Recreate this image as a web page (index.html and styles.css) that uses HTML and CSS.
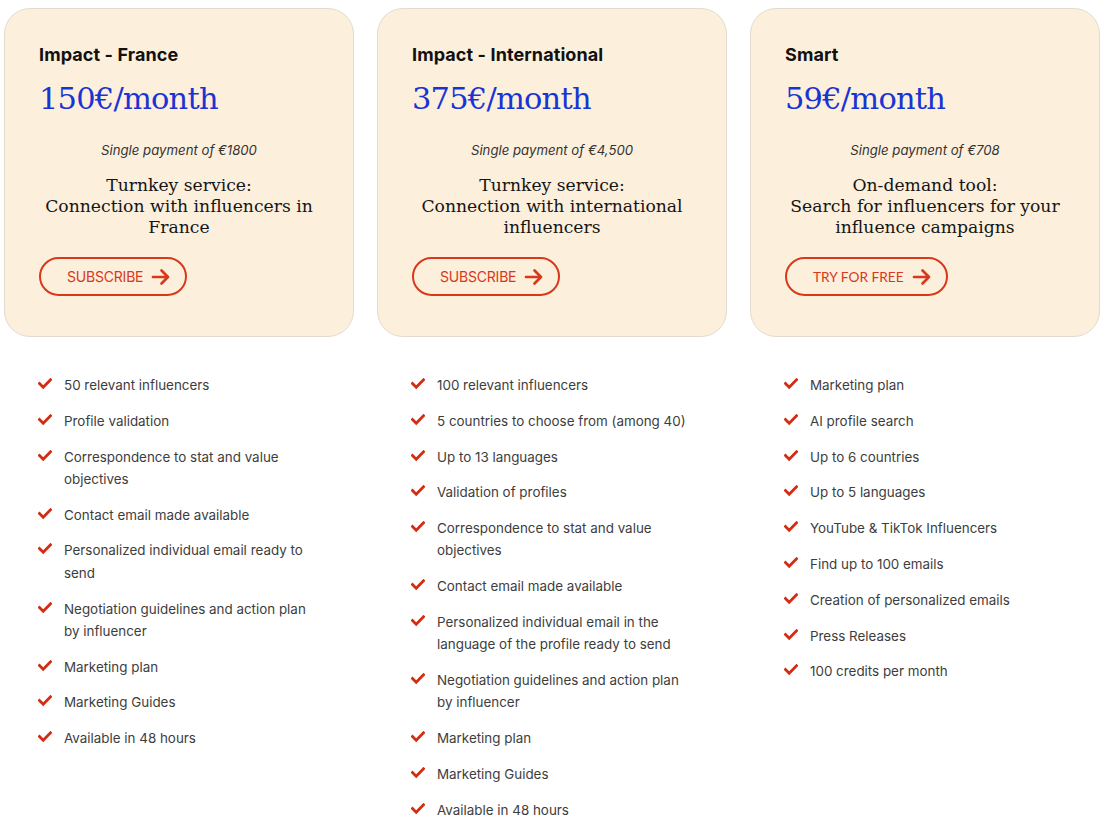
FILE: index.html
```html
<!DOCTYPE html>
<html>
<head>
<meta charset="utf-8">
<link rel="stylesheet" href="styles.css">
</head>
<body>
<div class="plans">
  <div class="plan">
    <div class="card">
      <h2 class="title">Impact - France</h2>
      <div class="price">150€/month</div>
      <div class="single">Single payment of €1800</div>
      <div class="desc">Turnkey service:<br>Connection with influencers in France</div>
      <a class="btn">SUBSCRIBE <svg class="arrow" viewBox="0 0 20 18"><path d="M2 9 H17 M10.5 2.5 L17 9 L10.5 15.5"/></svg></a>
    </div>
    <ul class="features">
      <li><svg class="check" viewBox="0 0 14 12"><path d="M1.5 5.5 L5.2 9.2 L12.5 1.8"/></svg><span>50 relevant influencers</span></li>
      <li><svg class="check" viewBox="0 0 14 12"><path d="M1.5 5.5 L5.2 9.2 L12.5 1.8"/></svg><span>Profile validation</span></li>
      <li><svg class="check" viewBox="0 0 14 12"><path d="M1.5 5.5 L5.2 9.2 L12.5 1.8"/></svg><span>Correspondence to stat and value objectives</span></li>
      <li><svg class="check" viewBox="0 0 14 12"><path d="M1.5 5.5 L5.2 9.2 L12.5 1.8"/></svg><span>Contact email made available</span></li>
      <li><svg class="check" viewBox="0 0 14 12"><path d="M1.5 5.5 L5.2 9.2 L12.5 1.8"/></svg><span>Personalized individual email ready to send</span></li>
      <li><svg class="check" viewBox="0 0 14 12"><path d="M1.5 5.5 L5.2 9.2 L12.5 1.8"/></svg><span>Negotiation guidelines and action plan by influencer</span></li>
      <li><svg class="check" viewBox="0 0 14 12"><path d="M1.5 5.5 L5.2 9.2 L12.5 1.8"/></svg><span>Marketing plan</span></li>
      <li><svg class="check" viewBox="0 0 14 12"><path d="M1.5 5.5 L5.2 9.2 L12.5 1.8"/></svg><span>Marketing Guides</span></li>
      <li><svg class="check" viewBox="0 0 14 12"><path d="M1.5 5.5 L5.2 9.2 L12.5 1.8"/></svg><span>Available in 48 hours</span></li>
    </ul>
  </div>
  <div class="plan">
    <div class="card">
      <h2 class="title">Impact - International</h2>
      <div class="price">375€/month</div>
      <div class="single">Single payment of €4,500</div>
      <div class="desc">Turnkey service:<br>Connection with international influencers</div>
      <a class="btn">SUBSCRIBE <svg class="arrow" viewBox="0 0 20 18"><path d="M2 9 H17 M10.5 2.5 L17 9 L10.5 15.5"/></svg></a>
    </div>
    <ul class="features">
      <li><svg class="check" viewBox="0 0 14 12"><path d="M1.5 5.5 L5.2 9.2 L12.5 1.8"/></svg><span>100 relevant influencers</span></li>
      <li><svg class="check" viewBox="0 0 14 12"><path d="M1.5 5.5 L5.2 9.2 L12.5 1.8"/></svg><span>5 countries to choose from (among 40)</span></li>
      <li><svg class="check" viewBox="0 0 14 12"><path d="M1.5 5.5 L5.2 9.2 L12.5 1.8"/></svg><span>Up to 13 languages</span></li>
      <li><svg class="check" viewBox="0 0 14 12"><path d="M1.5 5.5 L5.2 9.2 L12.5 1.8"/></svg><span>Validation of profiles</span></li>
      <li><svg class="check" viewBox="0 0 14 12"><path d="M1.5 5.5 L5.2 9.2 L12.5 1.8"/></svg><span>Correspondence to stat and value objectives</span></li>
      <li><svg class="check" viewBox="0 0 14 12"><path d="M1.5 5.5 L5.2 9.2 L12.5 1.8"/></svg><span>Contact email made available</span></li>
      <li><svg class="check" viewBox="0 0 14 12"><path d="M1.5 5.5 L5.2 9.2 L12.5 1.8"/></svg><span>Personalized individual email in the language of the profile ready to send</span></li>
      <li><svg class="check" viewBox="0 0 14 12"><path d="M1.5 5.5 L5.2 9.2 L12.5 1.8"/></svg><span>Negotiation guidelines and action plan by influencer</span></li>
      <li><svg class="check" viewBox="0 0 14 12"><path d="M1.5 5.5 L5.2 9.2 L12.5 1.8"/></svg><span>Marketing plan</span></li>
      <li><svg class="check" viewBox="0 0 14 12"><path d="M1.5 5.5 L5.2 9.2 L12.5 1.8"/></svg><span>Marketing Guides</span></li>
      <li><svg class="check" viewBox="0 0 14 12"><path d="M1.5 5.5 L5.2 9.2 L12.5 1.8"/></svg><span>Available in 48 hours</span></li>
    </ul>
  </div>
  <div class="plan">
    <div class="card">
      <h2 class="title">Smart</h2>
      <div class="price">59€/month</div>
      <div class="single">Single payment of €708</div>
      <div class="desc">On-demand tool:<br>Search for influencers for your influence campaigns</div>
      <a class="btn btn-lato">TRY FOR FREE <svg class="arrow" viewBox="0 0 20 18"><path d="M2 9 H17 M10.5 2.5 L17 9 L10.5 15.5"/></svg></a>
    </div>
    <ul class="features">
      <li><svg class="check" viewBox="0 0 14 12"><path d="M1.5 5.5 L5.2 9.2 L12.5 1.8"/></svg><span>Marketing plan</span></li>
      <li><svg class="check" viewBox="0 0 14 12"><path d="M1.5 5.5 L5.2 9.2 L12.5 1.8"/></svg><span>AI profile search</span></li>
      <li><svg class="check" viewBox="0 0 14 12"><path d="M1.5 5.5 L5.2 9.2 L12.5 1.8"/></svg><span>Up to 6 countries</span></li>
      <li><svg class="check" viewBox="0 0 14 12"><path d="M1.5 5.5 L5.2 9.2 L12.5 1.8"/></svg><span>Up to 5 languages</span></li>
      <li><svg class="check" viewBox="0 0 14 12"><path d="M1.5 5.5 L5.2 9.2 L12.5 1.8"/></svg><span>YouTube &amp; TikTok Influencers</span></li>
      <li><svg class="check" viewBox="0 0 14 12"><path d="M1.5 5.5 L5.2 9.2 L12.5 1.8"/></svg><span>Find up to 100 emails</span></li>
      <li><svg class="check" viewBox="0 0 14 12"><path d="M1.5 5.5 L5.2 9.2 L12.5 1.8"/></svg><span>Creation of personalized emails</span></li>
      <li><svg class="check" viewBox="0 0 14 12"><path d="M1.5 5.5 L5.2 9.2 L12.5 1.8"/></svg><span>Press Releases</span></li>
      <li><svg class="check" viewBox="0 0 14 12"><path d="M1.5 5.5 L5.2 9.2 L12.5 1.8"/></svg><span>100 credits per month</span></li>
    </ul>
  </div>
</div>
</body>
</html>
```

FILE: styles.css
```css
* { box-sizing: border-box; }
html, body { margin: 0; background: #fff; }
body { font-family: Inter, "Noto Sans", sans-serif; color: #3b3b3b; }

.plans {
  display: grid;
  grid-template-columns: 350px 350px 350px;
  column-gap: 23px;
  padding: 8px 4px 0 4px;
}

.card {
  background: #fcefdc;
  border: 1px solid #e3dbd0;
  border-radius: 26px;
  height: 329px;
  padding: 35px 34px 0 34px;
  display: flex;
  flex-direction: column;
  align-items: flex-start;
}

.title {
  margin: 0;
  font-size: 18px;
  line-height: 22px;
  font-weight: 700;
  color: #111;
  letter-spacing: 0.1px;
}

.price {
  margin-top: 13px;
  font-family: "DejaVu Serif", serif;
  font-size: 30.5px;
  line-height: 40px;
  color: #1a34d4;
  letter-spacing: -0.8px;
}

.single {
  margin-top: 21px;
  align-self: stretch;
  text-align: center;
  font-size: 13.2px;
  line-height: 20px;
  font-style: italic;
  color: #333;
}

.desc {
  margin-top: 15px;
  align-self: stretch;
  text-align: center;
  font-family: "DejaVu Serif", serif;
  font-size: 17.2px;
  line-height: 21px;
  color: #151515;
}

.btn {
  margin-top: 19px;
  height: 39px;
  border: 2px solid #d8391a;
  border-radius: 20px;
  display: flex;
  align-items: center;
  gap: 8px;
  padding: 0 14px 0 26px;
  color: #d8391a;
  font-size: 14px;
  letter-spacing: -0.2px;
}

.btn-lato {
  font-family: Lato, sans-serif;
  font-size: 13.7px;
  letter-spacing: 0;
}

.arrow {
  width: 20px;
  height: 18px;
  fill: none;
  stroke: #d8391a;
  stroke-width: 2.7;
  stroke-linecap: round;
  stroke-linejoin: round;
}

.features {
  list-style: none;
  margin: 37px 0 0 0;
  padding: 0 0 0 34px;
  width: 314px;
}

.features li {
  display: flex;
  align-items: flex-start;
  gap: 12px;
  font-size: 13.4px;
  line-height: 22.3px;
  color: #3d3d3d;
  margin-bottom: 13.5px;
}

.check {
  flex: none;
  width: 14px;
  height: 12px;
  margin-top: 4px;
  fill: none;
  stroke: #d42c12;
  stroke-width: 2.8;
  stroke-linecap: square;
  stroke-linejoin: miter;
}
```
